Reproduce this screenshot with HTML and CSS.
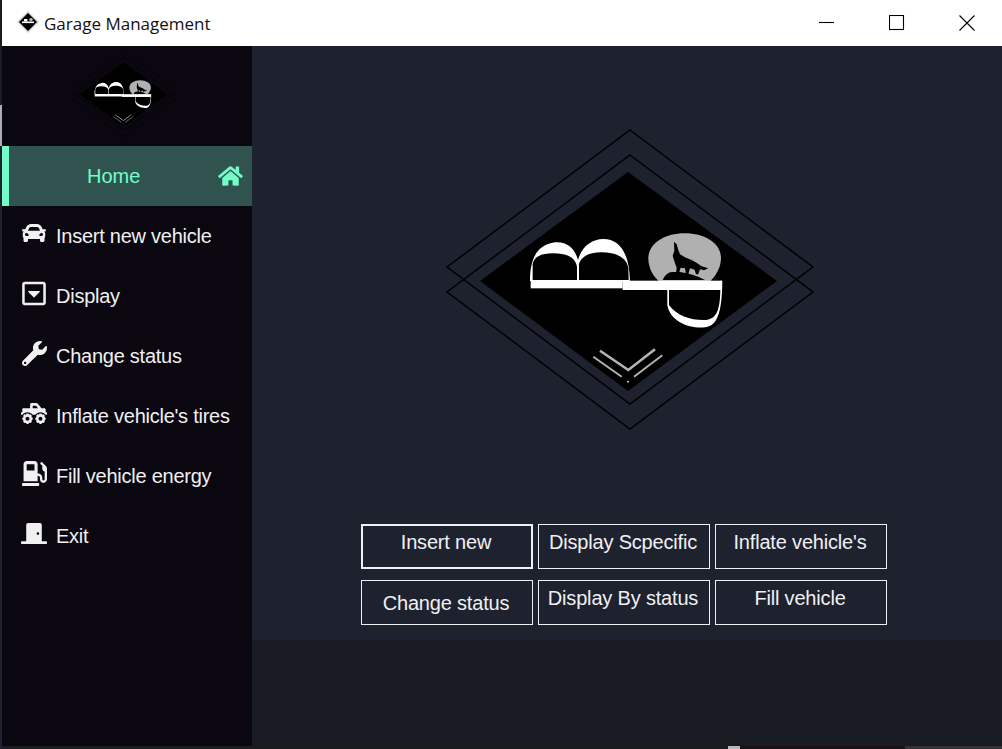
FILE: index.html
```html
<!DOCTYPE html>
<html lang="en">
<head>
<meta charset="utf-8">
<title>Garage Management</title>
<link rel="stylesheet" href="styles.css">
</head>
<body>
<svg class="defs" aria-hidden="true">
  <defs>
    <symbol id="logo" viewBox="440 125 380 310">
      <polygon points="630,130 813,267 630,404 447,267" fill="none" stroke="#000" stroke-width="1.5"/>
      <polygon points="630,155 813,292 630,429 447,292" fill="none" stroke="#000" stroke-width="1.5"/>
      <polygon points="628,172 777,281 628,391 480,281" fill="#000"/>
      <g transform="translate(520 225) scale(.3333)">
        <path fill="#b0b0b0" d="M385 100C385 55 435 25 494 25C555 25 603 55 603 100C603 130 585 155 570 170L418 170C400 155 385 130 385 100Z"/>
        <path fill="#000" d="M428 165Q435 148 450 142L475 140Q520 145 555 165Z"/>
        <path fill="#000" d="M462 50L470 58L474 72L480 88L495 97L515 105L532 115L545 124L565 130L552 136L540 133L535 148L528 148L524 134L510 130L505 148L498 148L495 130L482 128L476 148L468 148L470 128L464 112L458 92L463 78Z"/>
        <path fill="#fff" d="M30 168C30 110 45 60 105 52C140 48 165 70 174 105C185 65 215 42 250 42C300 42 328 85 330 170Z"/>
        <path fill="#000" d="M38 165L38 118C42 96 60 85 100 85C140 85 165 96 171 125L171 165Z"/>
        <path fill="#000" d="M177 165L177 118C182 96 205 82 245 82C290 82 320 98 325 130L326 165Z"/>
        <rect x="32" y="165" width="276" height="25" fill="#fff"/>
        <rect x="308" y="167" width="297" height="28" fill="#fff"/>
        <path fill="#fff" d="M442 190L442 240C450 290 510 312 555 307C590 302 606 270 607 167L600 167L600 195Z"/>
        <path fill="#000" d="M447 195L447 240C470 272 510 285 550 285C585 285 600 265 601 195Z"/>
      </g>
      <g fill="none" stroke="#b4b4b4">
        <polyline points="600,350.7 628.3,370 655,349.3" stroke-width="2.6"/>
        <line x1="593.3" y1="356.7" x2="621.7" y2="376.7" stroke-width="1.9"/>
        <line x1="634" y1="376.7" x2="662.3" y2="355.3" stroke-width="1.9"/>
      </g>
      <circle cx="628" cy="381.7" r="1" fill="#ccc"/>
    </symbol>
  </defs>
</svg>
<div class="screen">
  <div class="edge">
    <div class="edge-top"></div>
    <div class="edge-mid"></div>
    <div class="edge-light"></div>
    <div class="edge-low"></div>
  </div>
  <div class="window">
    <header class="titlebar">
      <svg class="app-icon" viewBox="0 0 22 22" aria-hidden="true">
        <polygon points="11,0 22,11 11,22 0,11" fill="#d4d4d4"/>
        <polygon points="11,2 20,11 11,20 2,11" fill="#000"/>
        <rect x="5" y="10.5" width="12" height="1.6" fill="#fff"/>
        <rect x="7" y="8" width="3.4" height="2.5" fill="#fff"/>
        <circle cx="14" cy="8.6" r="1.7" fill="#bbb"/>
      </svg>
      <span class="app-title">Garage Management</span>
      <div class="controls">
        <div class="control">
          <svg class="ctl" viewBox="0 0 16 16" aria-hidden="true"><line x1="0" y1="7.5" x2="15" y2="7.5"/></svg>
        </div>
        <div class="control">
          <svg class="ctl" viewBox="0 0 16 16" aria-hidden="true"><rect x=".5" y=".5" width="14" height="14"/></svg>
        </div>
        <div class="control">
          <svg class="ctl" viewBox="0 0 16 16" aria-hidden="true"><path d="M.5.5L15.5 15.5M15.5 .5L.5 15.5"/></svg>
        </div>
      </div>
    </header>
    <div class="app">
      <aside class="sidebar">
        <div class="brand">
          <svg class="brand-logo" aria-hidden="true"><use href="#logo"/></svg>
        </div>
        <nav class="nav">
          <a class="nav-home">
            <span class="home-label">Home</span>
            <svg class="home-icon" viewBox="0 0 576 512" aria-hidden="true"><path d="M280.37 148.26L96 300.11V464a16 16 0 0 0 16 16l112.06-.29a16 16 0 0 0 15.92-16V368a16 16 0 0 1 16-16h64a16 16 0 0 1 16 16v95.64a16 16 0 0 0 16 16.05L464 480a16 16 0 0 0 16-16V300L295.67 148.26a12.19 12.19 0 0 0-15.3 0zM571.6 251.47L488 182.56V44.05a12 12 0 0 0-12-12h-56a12 12 0 0 0-12 12v72.61L318.47 43a48 48 0 0 0-61 0L4.34 251.47a12 12 0 0 0-1.6 16.9l25.5 31A12 12 0 0 0 45.15 301l235.22-193.74a12.19 12.19 0 0 1 15.3 0L530.9 301a12 12 0 0 0 16.9-1.6l25.5-31a12 12 0 0 0-1.7-16.93z"/></svg>
          </a>
          <a class="nav-item">
            <span class="nav-icon"><svg class="i-car" viewBox="0 0 512 512" aria-hidden="true"><path d="M499.99 176h-59.87l-16.64-41.6C406.38 91.63 365.57 64 319.5 64h-127c-46.06 0-86.88 27.63-103.99 70.4L71.87 176H12.01C4.2 176-1.53 183.34.37 190.91l6 24C7.7 220.25 12.5 224 18.01 224h20.07C24.65 235.73 16 252.78 16 272v48c0 16.12 6.16 30.67 16 41.93V416c0 17.67 14.33 32 32 32h32c17.67 0 32-14.33 32-32v-32h256v32c0 17.67 14.33 32 32 32h32c17.67 0 32-14.33 32-32v-54.07c9.84-11.25 16-25.8 16-41.93v-48c0-19.22-8.65-36.27-22.07-48H494c5.51 0 10.31-3.75 11.64-9.09l6-24c1.89-7.57-3.84-14.91-11.65-14.91zm-352.06-17.83c7.29-18.22 24.94-30.17 44.57-30.17h127c19.63 0 37.28 11.95 44.57 30.17L384 208H128l19.93-49.83zM96 319.8c-19.2 0-32-12.76-32-31.9S76.8 256 96 256s48 28.71 48 47.85-28.8 15.95-48 15.95zm320 0c-19.2 0-48 3.19-48-15.95S396.8 256 416 256s32 12.76 32 31.9-12.8 31.9-32 31.9z"/></svg></span>
            <span>Insert new vehicle</span>
          </a>
          <a class="nav-item">
            <span class="nav-icon"><svg class="i-square" viewBox="0 0 448 512" aria-hidden="true"><path d="M125.1 208h197.8c10.7 0 16.1 13 8.5 20.5l-98.9 98.3c-4.7 4.7-12.2 4.7-16.9 0l-98.9-98.3c-7.7-7.5-2.3-20.5 8.4-20.5zM448 80v352c0 26.5-21.5 48-48 48H48c-26.5 0-48-21.5-48-48V80c0-26.5 21.5-48 48-48h352c26.5 0 48 21.5 48 48zm-48 346V86c0-3.3-2.7-6-6-6H54c-3.3 0-6 2.7-6 6v340c0 3.3 2.7 6 6 6h340c3.3 0 6-2.7 6-6z"/></svg></span>
            <span>Display</span>
          </a>
          <a class="nav-item">
            <span class="nav-icon"><svg class="i-wrench" viewBox="0 0 512 512" aria-hidden="true"><path d="M507.73 109.1c-2.24-9.03-13.54-12.09-20.12-5.51l-74.36 74.36-67.88-11.31-11.31-67.88 74.36-74.36c6.62-6.62 3.43-17.9-5.66-20.16-47.38-11.74-99.55.91-136.58 37.93-39.64 39.64-50.55 97.1-34.05 147.2L18.74 402.76c-24.99 24.99-24.99 65.51 0 90.5 24.99 24.99 65.51 24.99 90.5 0l213.21-213.21c50.12 16.71 107.47 5.68 147.37-34.22 37.07-37.07 49.7-89.32 37.91-136.73zM64 472c-13.25 0-24-10.75-24-24 0-13.26 10.75-24 24-24s24 10.74 24 24c0 13.25-10.75 24-24 24z"/></svg></span>
            <span>Change status</span>
          </a>
          <a class="nav-item">
            <span class="nav-icon"><svg class="i-truck" viewBox="0 0 640 512" aria-hidden="true"><path d="M624 224h-16v-64c0-17.67-14.33-32-32-32h-73.6L419.22 24.02A64.025 64.025 0 0 0 369.24 0H256c-17.67 0-32 14.33-32 32v96H48c-8.84 0-16 7.16-16 16v80H16c-8.84 0-16 7.16-16 16v32c0 8.84 7.16 16 16 16h16.72c29.21-38.65 75.1-64 127.28-64s98.07 25.35 127.28 64h65.45c29.21-38.65 75.1-64 127.28-64s98.07 25.35 127.28 64H624c8.84 0 16-7.16 16-16v-32c0-8.84-7.16-16-16-16zm-336-96V64h81.24l51.2 64H288zm304 224h-5.2c-2.2-7.33-5.07-14.28-8.65-20.89l3.67-3.67c6.25-6.25 6.25-16.38 0-22.63l-22.63-22.63c-6.25-6.25-16.38-6.25-22.63 0l-3.67 3.67A110.85 110.85 0 0 0 512 277.2V272c0-8.84-7.16-16-16-16h-32c-8.84 0-16 7.16-16 16v5.2c-7.33 2.2-14.28 5.07-20.89 8.65l-3.67-3.67c-6.25-6.25-16.38-6.25-22.63 0l-22.63 22.63c-6.25 6.25-6.25 16.38 0 22.63l3.67 3.67A110.85 110.85 0 0 0 373.2 352H368c-8.84 0-16 7.16-16 16v32c0 8.84 7.16 16 16 16h5.2c2.2 7.33 5.07 14.28 8.65 20.89l-3.67 3.67c-6.25 6.25-6.25 16.38 0 22.63l22.63 22.63c6.25 6.25 16.38 6.25 22.63 0l3.67-3.67c6.61 3.57 13.57 6.45 20.9 8.65v5.2c0 8.84 7.16 16 16 16h32c8.84 0 16-7.16 16-16v-5.2c7.33-2.2 14.28-5.07 20.9-8.65l3.67 3.67c6.25 6.25 16.38 6.25 22.63 0l22.63-22.63c6.25-6.25 6.25-16.38 0-22.63l-3.67-3.67a110.85 110.85 0 0 0 8.65-20.89h5.2c8.84 0 16-7.16 16-16v-32c-.02-8.84-7.18-16-16.02-16zm-112 80c-26.51 0-48-21.49-48-48s21.49-48 48-48 48 21.49 48 48-21.49 48-48 48zm-208-80h-5.2c-2.2-7.33-5.07-14.28-8.65-20.89l3.67-3.67c6.25-6.25 6.25-16.38 0-22.63l-22.63-22.63c-6.25-6.25-16.38-6.25-22.63 0l-3.67 3.67A110.85 110.85 0 0 0 192 277.2V272c0-8.84-7.16-16-16-16h-32c-8.84 0-16 7.16-16 16v5.2c-7.33 2.2-14.28 5.07-20.89 8.65l-3.67-3.67c-6.25-6.25-16.38-6.25-22.63 0L58.18 304.8c-6.25 6.25-6.25 16.38 0 22.63l3.67 3.67a110.85 110.85 0 0 0-8.65 20.89H48c-8.84 0-16 7.16-16 16v32c0 8.84 7.16 16 16 16h5.2c2.2 7.33 5.07 14.28 8.65 20.89l-3.67 3.67c-6.25 6.25-6.25 16.38 0 22.63l22.63 22.63c6.25 6.25 16.38 6.25 22.63 0l3.67-3.67c6.61 3.57 13.57 6.45 20.9 8.65v5.2c0 8.84 7.16 16 16 16h32c8.84 0 16-7.16 16-16v-5.2c7.33-2.2 14.28-5.07 20.9-8.65l3.67 3.67c6.25 6.25 16.38 6.25 22.63 0l22.63-22.63c6.25-6.25 6.25-16.38 0-22.63l-3.67-3.67a110.85 110.85 0 0 0 8.65-20.89h5.2c8.84 0 16-7.16 16-16v-32C296 359.16 288.84 352 280 352zm-112 80c-26.51 0-48-21.49-48-48s21.49-48 48-48 48 21.49 48 48-21.49 48-48 48z"/></svg></span>
            <span>Inflate vehicle's tires</span>
          </a>
          <a class="nav-item">
            <span class="nav-icon"><svg class="i-gas" viewBox="0 0 512 512" aria-hidden="true"><path d="M336 448H16c-8.8 0-16 7.2-16 16v32c0 8.8 7.2 16 16 16h320c8.8 0 16-7.2 16-16v-32c0-8.8-7.2-16-16-16zm157.2-340.7l-81-81c-6.2-6.2-16.4-6.2-22.6 0l-11.3 11.3c-6.2 6.2-6.2 16.4 0 22.6L416 97.9V160c0 28.1 20.9 51.3 48 55.2V376c0 13.2-10.8 24-24 24s-24-10.8-24-24v-32c0-48.6-39.4-88-88-88h-8V64c0-35.3-28.7-64-64-64H96C60.7 0 32 28.7 32 64v352h288V304h8c22.1 0 40 17.9 40 40v27.8c0 37.7 27 72 64.5 75.9 43 4.3 79.5-29.5 79.5-71.7V152.6c0-17-6.8-33.3-18.8-45.3zM256 192H96V64h160v128z"/></svg></span>
            <span>Fill vehicle energy</span>
          </a>
          <a class="nav-item">
            <span class="nav-icon"><svg class="i-door" viewBox="0 0 640 512" aria-hidden="true"><path d="M624 448H512V50.8C512 22.78 490.47 0 464 0H175.99c-26.47 0-48 22.78-48 50.8V448H16c-8.84 0-16 7.16-16 16v32c0 8.84 7.16 16 16 16h608c8.84 0 16-7.16 16-16v-32c0-8.84-7.16-16-16-16zM415.99 288c-17.67 0-32-14.33-32-32s14.33-32 32-32 32 14.33 32 32c.01 17.67-14.32 32-32 32z"/></svg></span>
            <span>Exit</span>
          </a>
        </nav>
      </aside>
      <main class="main">
        <section class="content">
          <svg class="hero-logo" aria-hidden="true"><use href="#logo"/></svg>
          <div class="actions">
            <button class="action action-focus">Insert new</button>
            <button class="action">Display Scpecific</button>
            <button class="action">Inflate vehicle's</button>
            <button class="action action-center">Change status</button>
            <button class="action">Display By status</button>
            <button class="action">Fill vehicle</button>
          </div>
        </section>
        <footer class="footer"></footer>
      </main>
    </div>
    <div class="strip">
      <div class="strip-a"></div>
      <div class="strip-b"></div>
      <div class="strip-c"></div>
      <div class="strip-d"></div>
    </div>
  </div>
</div>
</body>
</html>
```
FILE: styles.css
```css
* { box-sizing: border-box; }
html, body { margin: 0; padding: 0; }
body {
  width: 1002px;
  height: 749px;
  overflow: hidden;
  font-family: "Liberation Sans", Arial, sans-serif;
  background: #1a1c22;
}
.defs { width: 0; height: 0; display: block; overflow: hidden; }
.screen { display: flex; width: 1002px; height: 749px; }

.edge { width: 2px; display: flex; flex-direction: column; flex: none; }
.edge-top { height: 46px; background: #1c1c1c; }
.edge-mid { height: 59px; background: #1a1c26; }
.edge-light { height: 41px; background: #a9adb8; }
.edge-low { flex: 1; background: #1e2230; }

.window { width: 1000px; display: flex; flex-direction: column; }

.titlebar {
  height: 46px;
  flex: none;
  background: #fff;
  display: flex;
  align-items: center;
  padding-left: 15px;
}
.app-icon { width: 22px; height: 22px; flex: none; margin-bottom: 2px; }
.app-title {
  margin-left: 5px;
  font-family: "Open Sans", sans-serif;
  font-size: 17px;
  color: #111;
}
.controls { margin-left: auto; display: flex; }
.control {
  width: 70px;
  height: 46px;
  display: flex;
  align-items: center;
  justify-content: center;
}
.ctl {
  width: 16px;
  height: 16px;
  fill: none;
  stroke: #000;
  stroke-width: 1.1;
}

.app { flex: 1; display: flex; min-height: 0; }

.sidebar {
  width: 250px;
  flex: none;
  background: #0a0710;
  display: flex;
  flex-direction: column;
}
.brand { height: 100px; flex: none; padding: 2px 0 0 66px; }
.brand-logo { display: block; width: 112px; height: 92px; }

.nav { display: flex; flex-direction: column; }
.nav-home {
  height: 60px;
  display: flex;
  align-items: center;
  padding-left: 78px;
  padding-right: 9px;
  background: #315350;
  border-left: 7px solid #73fcc8;
  color: #73fcc8;
  font-size: 20px;
}
.home-icon {
  margin-left: auto;
  width: 25px;
  height: 22px;
  fill: #73fcc8;
}
.nav-item {
  height: 60px;
  display: flex;
  align-items: center;
  padding-left: 19px;
  color: #f0f0f2;
  font-size: 20px;
  letter-spacing: -0.25px;
}
.nav-icon {
  width: 26px;
  height: 28px;
  margin-right: 9px;
  margin-bottom: 6px;
  display: flex;
  align-items: center;
  justify-content: center;
  flex: none;
}
.nav-icon svg { display: block; fill: #f0f0f2; }
.i-car { width: 24px; height: 26px; }
.i-square { width: 24px; height: 27px; }
.i-wrench { width: 25px; height: 25px; }
.i-truck { width: 26px; height: 21px; }
.i-gas { width: 25px; height: 25px; }
.i-door { width: 26px; height: 21px; }

.main { flex: 1; display: flex; flex-direction: column; min-width: 0; }
.content { height: 594px; flex: none; background: #1e212e; padding: 79px 0 0 188px; }
.hero-logo { display: block; width: 380px; height: 310px; }
.actions {
  margin: 89px 0 0 -79px;
  display: grid;
  grid-template-columns: repeat(3, 172px);
  grid-auto-rows: 45px;
  column-gap: 5px;
  row-gap: 11px;
}
.action {
  background: transparent;
  border: 1px solid #f0f0f4;
  border-radius: 0;
  color: #f0f0f4;
  font-family: "Liberation Sans", Arial, sans-serif;
  font-size: 20px;
  letter-spacing: -0.18px;
  padding: 0 2px 9px 0;
  margin: 0;
}
.action-focus { border-width: 2px; }
.action-center { padding: 2px 2px 0 0; }
.footer { flex: 1; background: #181c22; }

.strip { height: 3px; flex: none; display: flex; background: #1b1c20; }
.strip-a { width: 726px; background: #1b1c20; }
.strip-b { width: 12px; background: #b6b8c0; }
.strip-c { width: 165px; background: #1a1214; }
.strip-d { flex: 1; background: #333338; }
```
